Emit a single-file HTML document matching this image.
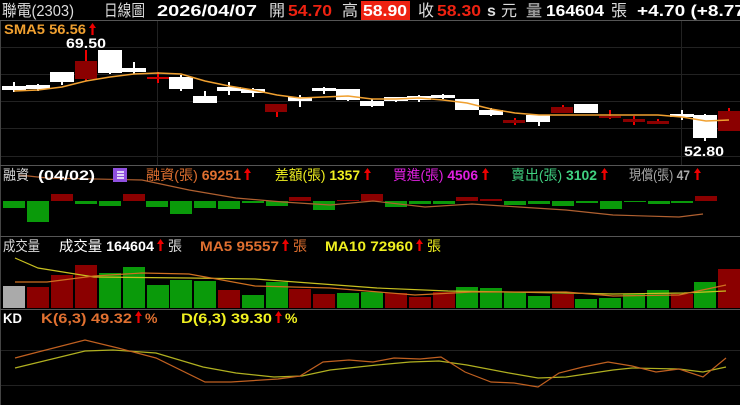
<!DOCTYPE html>
<html><head><meta charset="utf-8"><style>
html,body{margin:0;padding:0;background:#000;width:740px;height:405px;overflow:hidden}
svg{display:block}
text{font-family:"Liberation Sans","Noto Sans CJK TC",sans-serif;font-weight:bold}
.n{font-weight:normal}
</style></head><body>
<svg width="740" height="405" viewBox="0 0 740 405" xmlns="http://www.w3.org/2000/svg">
<defs><path id="ar" d="M3.5 0 L7 5 L4.6 5 L4.6 12 L2.4 12 L2.4 5 L0 5Z" fill="#e00"/></defs>
<rect width="740" height="405" fill="#000"/>
<!-- header -->
<g font-size="16" lengthAdjust="spacingAndGlyphs">
<text x="2" y="16" fill="#ddd" class="n" textLength="72" lengthAdjust="spacingAndGlyphs">聯電(2303)</text>
<text x="104" y="16" fill="#ddd" class="n" textLength="41" lengthAdjust="spacingAndGlyphs">日線圖</text>
<text x="157" y="16" fill="#fff" textLength="100" lengthAdjust="spacingAndGlyphs">2026/04/07</text>
<text x="269" y="16" fill="#ddd" class="n">開</text>
<text x="288" y="16" fill="#e21" textLength="44" lengthAdjust="spacingAndGlyphs">54.70</text>
<text x="342" y="16" fill="#ddd" class="n">高</text>
<rect x="361" y="1" width="49" height="19" fill="#e21"/>
<text x="363" y="16" fill="#fff" textLength="44" lengthAdjust="spacingAndGlyphs">58.90</text>
<text x="418" y="16" fill="#ddd" class="n">收</text>
<text x="437" y="16" fill="#e21" textLength="44" lengthAdjust="spacingAndGlyphs">58.30</text>
<text x="487" y="16" fill="#ddd">s</text>
<text x="501" y="16" fill="#ddd" class="n">元</text>
<text x="526" y="16" fill="#999">量</text>
<text x="546" y="16" fill="#fff" textLength="58" lengthAdjust="spacingAndGlyphs">164604</text>
<text x="611" y="16" fill="#ddd" class="n">張</text>
<text x="637" y="16" fill="#fff" textLength="108" lengthAdjust="spacingAndGlyphs">+4.70 (+8.77</text>
</g>
<line x1="0" y1="20.5" x2="740" y2="20.5" stroke="#555"/>
<!-- grid -->
<g stroke="#222" stroke-width="1">
<line x1="0" y1="47.5" x2="740" y2="47.5"/><line x1="0" y1="74.5" x2="740" y2="74.5"/>
<line x1="0" y1="101.5" x2="740" y2="101.5"/><line x1="0" y1="128.5" x2="740" y2="128.5"/>
<line x1="0" y1="156.5" x2="740" y2="156.5"/>
<line x1="157.5" y1="21" x2="157.5" y2="165"/><line x1="681.5" y1="21" x2="681.5" y2="165"/>
<line x1="0" y1="350.5" x2="740" y2="350.5"/><line x1="0" y1="385.5" x2="740" y2="385.5"/>
</g>
<line x1="0.5" y1="21" x2="0.5" y2="405" stroke="#444"/>
<line x1="0" y1="165.5" x2="740" y2="165.5" stroke="#555"/>
<line x1="0" y1="236.5" x2="740" y2="236.5" stroke="#555"/>
<line x1="0" y1="309.5" x2="740" y2="309.5" stroke="#555"/>
<!-- candles -->
<g stroke-width="2">
<g stroke="#fff" fill="#fff">
<line x1="14" y1="82" x2="14" y2="92"/><rect x="3" y="87" width="22" height="2"/>
<line x1="38" y1="84" x2="38" y2="91"/><rect x="27" y="86" width="22" height="2"/>
<line x1="62" y1="78" x2="62" y2="85"/><rect x="51" y="73" width="22" height="8"/>
<rect x="99" y="51" width="22" height="21"/><line x1="110" y1="72" x2="110" y2="74"/>
<line x1="134" y1="62" x2="134" y2="74"/><rect x="123" y="69" width="22" height="2"/>
<line x1="181" y1="75" x2="181" y2="91"/><rect x="170" y="78" width="22" height="10"/>
<line x1="205" y1="91" x2="205" y2="100"/><rect x="194" y="97" width="22" height="5"/>
<line x1="229" y1="82" x2="229" y2="95"/><rect x="218" y="88" width="22" height="2"/>
<line x1="253" y1="88" x2="253" y2="97"/><rect x="242" y="90" width="22" height="2"/>
<line x1="300" y1="95" x2="300" y2="107"/><rect x="289" y="98" width="22" height="2"/>
<line x1="324" y1="87" x2="324" y2="94"/><rect x="313" y="89" width="22" height="1"/>
<rect x="337" y="90" width="22" height="9"/><line x1="348" y1="99" x2="348" y2="101"/>
<line x1="372" y1="99" x2="372" y2="107"/><rect x="361" y="102" width="22" height="3"/>
<line x1="396" y1="97" x2="396" y2="102"/><rect x="385" y="98" width="22" height="2"/>
<line x1="419" y1="95" x2="419" y2="102"/><rect x="408" y="97" width="22" height="2"/>
<line x1="443" y1="94" x2="443" y2="99"/><rect x="432" y="96" width="22" height="1"/>
<rect x="456" y="100" width="22" height="9"/><line x1="467" y1="109" x2="467" y2="110"/>
<line x1="491" y1="108" x2="491" y2="116"/><rect x="480" y="111" width="22" height="3"/>
<line x1="539" y1="116" x2="539" y2="126"/><rect x="527" y="116" width="22" height="5"/>
<rect x="575" y="105" width="22" height="7"/>
<line x1="682" y1="110" x2="682" y2="120"/><rect x="671" y="115" width="22" height="1"/>
<line x1="705" y1="114" x2="705" y2="141"/><rect x="694" y="116" width="22" height="21"/>
</g>
<g stroke="#e00" fill="#8b0000">
<line x1="86" y1="50" x2="86" y2="81"/><rect x="75" y="61" width="22" height="18" stroke="none"/>
<line x1="158" y1="72" x2="158" y2="83"/><rect x="147" y="77" width="22" height="2" stroke="none" fill="#c00"/>
<line x1="277" y1="104" x2="277" y2="117"/><rect x="265" y="104" width="22" height="8" stroke="none"/>
<line x1="515" y1="118" x2="515" y2="125"/><rect x="503" y="120" width="22" height="3" stroke="none"/>
<line x1="563" y1="105" x2="563" y2="110"/><rect x="551" y="107" width="22" height="6" stroke="none"/>
<line x1="610" y1="110" x2="610" y2="119"/><rect x="599" y="116" width="22" height="2" stroke="none"/>
<line x1="634" y1="116" x2="634" y2="125"/><rect x="623" y="119" width="22" height="3" stroke="none"/>
<line x1="658" y1="119" x2="658" y2="124"/><rect x="647" y="121" width="22" height="3" stroke="none"/>
<line x1="729" y1="108" x2="729" y2="112"/><rect x="718" y="111" width="22" height="20" stroke="none"/>
</g>
</g>
<polyline fill="none" stroke="#f0a030" stroke-width="1.6" points="14,91 38,90 62,87 86,81 110,77 134,74 158,73 181,74 205,81 229,86 253,90 277,95 300,98 324,97 348,96 372,99 396,99 419,98 443,100 467,103 491,109 515,113 539,115 563,115 587,115 610,115 634,115 658,115 682,117 706,121 729,120"/>
<text x="4" y="34" font-size="14" fill="#f0a030" textLength="82" lengthAdjust="spacingAndGlyphs">SMA5 56.56</text>
<use href="#ar" x="89" y="23"/>
<text x="66" y="48" font-size="14" fill="#fff" textLength="40" lengthAdjust="spacingAndGlyphs">69.50</text>
<text x="684" y="156" font-size="14" fill="#fff" textLength="40" lengthAdjust="spacingAndGlyphs">52.80</text>
<!-- margin panel -->
<g fill="#0a9a0a">
<rect x="3" y="201" width="22" height="7"/><rect x="27" y="201" width="22" height="21"/>
<rect x="75" y="201" width="22" height="3"/><rect x="99" y="201" width="22" height="5"/>
<rect x="146" y="201" width="22" height="6"/><rect x="170" y="201" width="22" height="13"/>
<rect x="194" y="201" width="22" height="7"/><rect x="218" y="201" width="22" height="8"/>
<rect x="242" y="201" width="22" height="2"/><rect x="266" y="201" width="22" height="5"/>
<rect x="313" y="201" width="22" height="9"/><rect x="385" y="201" width="22" height="6"/>
<rect x="409" y="201" width="22" height="3"/><rect x="433" y="201" width="22" height="3"/>
<rect x="504" y="201" width="22" height="4"/><rect x="528" y="201" width="22" height="3"/>
<rect x="552" y="201" width="22" height="5"/><rect x="576" y="201" width="22" height="2"/>
<rect x="600" y="201" width="22" height="8"/><rect x="624" y="201" width="22" height="1"/>
<rect x="648" y="201" width="22" height="3"/><rect x="671" y="201" width="22" height="2"/>
</g>
<g fill="#8b0000">
<rect x="51" y="194" width="22" height="7"/><rect x="123" y="194" width="22" height="7"/>
<rect x="289" y="197" width="22" height="4"/><rect x="337" y="200" width="22" height="1"/>
<rect x="361" y="194" width="22" height="7"/><rect x="456" y="197" width="22" height="4"/>
<rect x="480" y="199" width="22" height="2"/><rect x="695" y="196" width="22" height="5"/>
</g>
<polyline fill="none" stroke="#b06030" stroke-width="1.2" points="19,175 47,178 142,180 189,190 236,198 283,202 330,205 373,201 425,207 472,204 519,207 566,210 613,215 679,217 703,214"/>
<g font-size="14">
<text x="3" y="180" fill="#ddd" class="n" textLength="26" lengthAdjust="spacingAndGlyphs">融資</text>
<text x="38" y="180" fill="#fff" textLength="57" lengthAdjust="spacingAndGlyphs">(04/02)</text>
<rect x="113" y="168" width="14" height="14" fill="#9050e0"/>
<g stroke="#fff" stroke-width="1.5"><line x1="117" y1="172" x2="124" y2="172"/><line x1="117" y1="175" x2="124" y2="175"/><line x1="117" y1="178" x2="124" y2="178"/></g>
<text x="146" y="180" fill="#e07030" textLength="95" lengthAdjust="spacingAndGlyphs"><tspan class="n">融資(張)</tspan> 69251</text><use href="#ar" x="244" y="168"/>
<text x="275" y="180" fill="#f0f020" textLength="85" lengthAdjust="spacingAndGlyphs"><tspan class="n">差額(張)</tspan> 1357</text><use href="#ar" x="364" y="168"/>
<text x="393" y="180" fill="#e020e0" textLength="85" lengthAdjust="spacingAndGlyphs"><tspan class="n">買進(張)</tspan> 4506</text><use href="#ar" x="482" y="168"/>
<text x="511" y="180" fill="#40d080" textLength="86" lengthAdjust="spacingAndGlyphs"><tspan class="n">賣出(張)</tspan> 3102</text><use href="#ar" x="601" y="168"/>
<text x="629" y="180" fill="#aaa" textLength="61" lengthAdjust="spacingAndGlyphs"><tspan class="n">現償(張)</tspan> 47</text><use href="#ar" x="694" y="168"/>
</g>
<!-- volume -->
<rect x="3" y="286" width="22" height="22" fill="#aaa"/>
<g fill="#8b0000">
<rect x="27" y="287" width="22" height="21"/><rect x="51" y="275" width="22" height="33"/>
<rect x="75" y="265" width="22" height="43"/><rect x="218" y="290" width="22" height="18"/>
<rect x="289" y="289" width="22" height="19"/><rect x="313" y="294" width="22" height="14"/>
<rect x="385" y="293" width="22" height="15"/><rect x="409" y="297" width="22" height="11"/>
<rect x="433" y="292" width="22" height="16"/><rect x="552" y="294" width="22" height="14"/>
<rect x="671" y="294" width="22" height="14"/><rect x="718" y="269" width="22" height="39"/>
</g>
<g fill="#0a9a0a">
<rect x="99" y="273" width="22" height="35"/><rect x="123" y="267" width="22" height="41"/>
<rect x="147" y="285" width="22" height="23"/><rect x="170" y="280" width="22" height="28"/>
<rect x="194" y="281" width="22" height="27"/><rect x="242" y="295" width="22" height="13"/>
<rect x="266" y="282" width="22" height="26"/><rect x="337" y="293" width="22" height="15"/>
<rect x="361" y="292" width="22" height="16"/><rect x="456" y="287" width="22" height="21"/>
<rect x="480" y="288" width="22" height="20"/><rect x="504" y="292" width="22" height="16"/>
<rect x="528" y="296" width="22" height="12"/><rect x="575" y="299" width="22" height="9"/>
<rect x="599" y="298" width="22" height="10"/><rect x="623" y="294" width="22" height="14"/>
<rect x="647" y="290" width="22" height="18"/><rect x="694" y="282" width="22" height="26"/>
</g>
<polyline fill="none" stroke="#c8c020" stroke-width="1.2" points="15,258 38,268 94,277 189,278 255,279 377,288 448,291 566,293 613,294 684,293 726,291"/>
<polyline fill="none" stroke="#d07020" stroke-width="1.2" points="15,282 47,282 94,276 142,273 189,274 255,286 330,288 415,295 472,292 566,292 613,296 679,295 726,285"/>
<g font-size="14">
<text x="3" y="251" fill="#ddd" class="n" textLength="37" lengthAdjust="spacingAndGlyphs">成交量</text>
<text x="59" y="251" fill="#fff" textLength="95" lengthAdjust="spacingAndGlyphs"><tspan class="n">成交量</tspan> 164604</text><use href="#ar" x="157" y="239"/>
<text x="168" y="251" fill="#ddd" class="n">張</text>
<text x="200" y="251" fill="#e07030" textLength="79" lengthAdjust="spacingAndGlyphs">MA5 95557</text><use href="#ar" x="282" y="239"/>
<text x="293" y="251" fill="#e07030" class="n">張</text>
<text x="325" y="251" fill="#f0f020" textLength="88" lengthAdjust="spacingAndGlyphs">MA10 72960</text><use href="#ar" x="416" y="239"/>
<text x="427" y="251" fill="#f0f020" class="n">張</text>
<!-- KD -->
<text x="3" y="323" fill="#fff" textLength="19" lengthAdjust="spacingAndGlyphs">KD</text>
<text x="41" y="323" fill="#e07030" textLength="91" lengthAdjust="spacingAndGlyphs">K(6,3) 49.32</text><use href="#ar" x="135" y="311"/>
<text x="145" y="323" fill="#e07030">%</text>
<text x="181" y="323" fill="#f0f020" textLength="91" lengthAdjust="spacingAndGlyphs">D(6,3) 39.30</text><use href="#ar" x="275" y="311"/>
<text x="285" y="323" fill="#f0f020">%</text>
</g>
<polyline fill="none" stroke="#b0b020" stroke-width="1.2" points="15,368 85,351 113,350 156,353 203,367 236,373 274,377 302,376 330,370 377,365 410,362 439,361 467,365 509,373 538,378 566,377 613,370 632,368 679,369 703,372 726,367"/>
<polyline fill="none" stroke="#c06020" stroke-width="1.2" points="15,358 38,352 85,340 118,348 156,358 205,382 231,382 278,379 300,376 323,362 349,360 373,362 394,358 420,359 441,357 465,372 491,382 514,383 538,387 559,373 583,367 608,362 632,366 656,372 679,369 703,377 726,358"/>
</svg>
</body></html>
